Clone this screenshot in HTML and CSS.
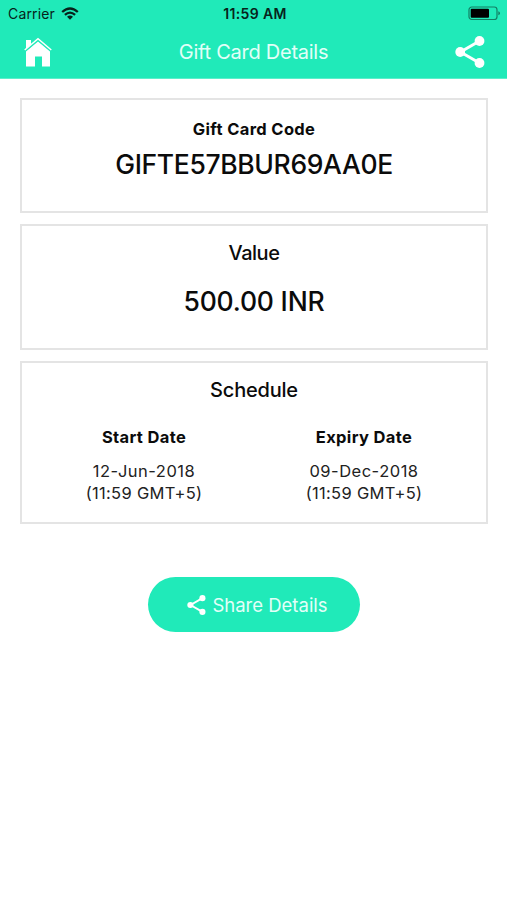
FILE: index.html
```html
<!DOCTYPE html>
<html lang="en">
<head>
<meta charset="utf-8">
<title>Gift Card Details</title>
<link rel="stylesheet" href="styles.css">
</head>
<body>
<header class="header">
  <div class="status">
    <div class="carrier"><span class="carrier-name">Carrier</span>
      <svg class="wifi" viewBox="0 0 18 13" width="18" height="13"><g fill="none" stroke="#07231b" stroke-width="2.3"><path d="M1.2 5Q9-2 16.8 5"/><path d="M3.9 7.9Q9 3.4 14.1 7.9"/></g><path fill="#07231b" d="M6 9.7Q9 7.300 12 9.700L9 12.700Z"/></svg>
    </div>
    <span class="time">11:59 AM</span>
    <svg class="battery" viewBox="0 0 33 15" width="33" height="15"><rect x="1" y="1" width="28" height="12.500" rx="2.800" fill="none" stroke="#137f64" stroke-width="1.200"/><rect x="2.700" y="2.700" width="18.300" height="9.100" rx="1" fill="#000"/><path d="M30.300 5.200Q32 5.600 32 7.200T30.300 9.300Z" fill="#137f64"/></svg>
  </div>
  <div class="nav">
    <svg class="home" viewBox="0 0 28 30" width="28" height="30"><path fill="#fff" d="M2 3h5v4.500L2 12ZM14 4.500L26 14.500V29.500H18V19.500H11V29.500H2V14.500Z"/><path fill="none" stroke="#20eab9" stroke-width=".6" d="M1 14.500L14 3.500L27 14.500"/><path fill="none" stroke="#fff" stroke-width="1.500" d="M.7 13L14 1.700L27.300 13"/></svg>
    <h1 class="title">Gift Card Details</h1>
    <svg class="share" viewBox="0 0 30 32" width="30" height="32"><path d="M24.500 5L5.500 16L24.500 27" fill="none" stroke="#fff" stroke-width="3"/><g fill="#fff"><circle cx="24.500" cy="5" r="4.900"/><circle cx="5.200" cy="16" r="4.900"/><circle cx="24.500" cy="27" r="4.900"/></g></svg>
  </div>
</header>
<main class="content">
  <section class="card code-card">
    <h2 class="label">Gift Card Code</h2>
    <p class="big code">GIFTE57BBUR69AA0E</p>
  </section>
  <section class="card value-card">
    <h2 class="heading value-heading">Value</h2>
    <p class="big amount">500.00 INR</p>
  </section>
  <section class="card schedule-card">
    <h2 class="heading">Schedule</h2>
    <div class="dates">
      <div class="date"><h3 class="label">Start Date</h3><p class="day">12-Jun-2018</p><p class="hour">(11:59 GMT+5)</p></div>
      <div class="date"><h3 class="label">Expiry Date</h3><p class="day">09-Dec-2018</p><p class="hour">(11:59 GMT+5)</p></div>
    </div>
  </section>
  <button class="button">
    <svg viewBox="0 0 30 32" width="19" height="20"><path d="M24.500 5L5.500 16L24.500 27" fill="none" stroke="#fff" stroke-width="3"/><g fill="#fff"><circle cx="24.500" cy="5" r="4.900"/><circle cx="5.200" cy="16" r="4.900"/><circle cx="24.500" cy="27" r="4.900"/></g></svg>
    <span>Share Details</span>
  </button>
</main>
</body>
</html>
```
FILE: styles.css
```css
* { box-sizing: border-box; }
body { margin: 0; background: #fff; color: #0b0b0b; font-family: Inter, "Liberation Sans", sans-serif; }
h1, h2, h3, p { margin: 0; }
svg { display: block; flex: none; }
.header { height: 79px; background: #20eab9; border-bottom: 1px solid #5cefcb; }
.status { height: 28px; display: grid; grid-template-columns: 1fr auto 1fr; align-items: center; padding: 0 6px 0 8px; color: #07231b; font-size: 14px; line-height: 28px; }
.carrier { display: flex; align-items: center; gap: 6px; }
.carrier-name { letter-spacing: .15px; }
.wifi { margin-top: -2px; }
.time { font-weight: 600; letter-spacing: .5px; }
.time { letter-spacing: .35px; margin-left: 1px; }
.battery { justify-self: end; margin-top: -1px; }
.nav { height: 50px; display: flex; align-items: center; justify-content: space-between; padding: 0 22px 0 24px; }
.title { margin-top: -2px; color: #e2fff8; font-size: 20px; font-weight: 400; line-height: 24px; letter-spacing: -.25px; }
.home { margin-top: -2px; }
.share { margin-top: -2px; }
.content { display: flex; flex-direction: column; align-items: center; padding: 19px 19px 0 20px; }
.card { width: 100%; border: 2px solid #e4e4e4; text-align: center; }
.code-card { height: 115px; padding-top: 19px; margin-bottom: 11px; }
.value-card { height: 126px; padding-top: 14px; margin-bottom: 11px; }
.schedule-card { height: 163px; padding-top: 14px; }
.label { font-size: 16.5px; font-weight: 700; line-height: 20px; letter-spacing: .35px; }
.big { font-size: 26.5px; font-weight: 450; line-height: 32px; letter-spacing: -.35px; }
.code { margin-top: 9px; }
.heading { font-size: 20px; font-weight: 500; line-height: 26px; letter-spacing: -.2px; }
.value-heading { letter-spacing: -.5px; }
.amount { margin-top: 19px; letter-spacing: -.2px; }
.dates { display: grid; grid-template-columns: 1fr 1fr; padding: 0 12px; margin-top: 24px; }
.day, .hour { font-size: 16.5px; line-height: 22px; color: #222; }
.day { margin-top: 13px; letter-spacing: .5px; }
.hour { letter-spacing: .3px; }
.button { display: flex; align-items: center; justify-content: center; gap: 6px; width: 212px; height: 55px; margin-top: 53px; padding: 0 0 0 7px; border: 0; border-radius: 28px; background: #20eab9; color: #e2fff8; font: 400 18.5px/24px Inter, "Liberation Sans", sans-serif; }
```
